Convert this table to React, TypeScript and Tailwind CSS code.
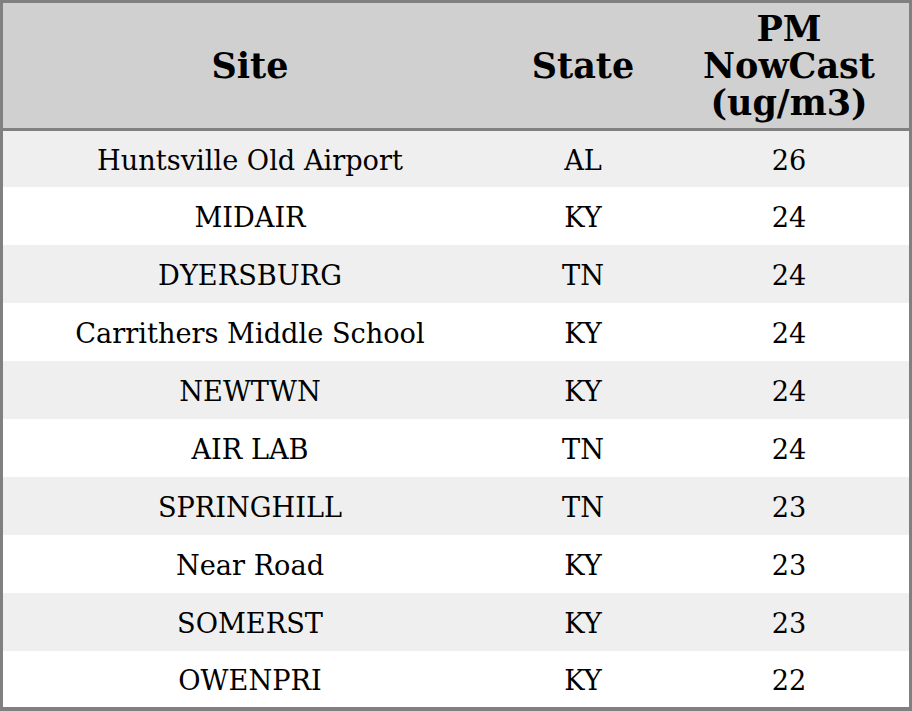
const rows: [string, string, string][] = [
  ["Huntsville Old Airport", "AL", "26"],
  ["MIDAIR", "KY", "24"],
  ["DYERSBURG", "TN", "24"],
  ["Carrithers Middle School", "KY", "24"],
  ["NEWTWN", "KY", "24"],
  ["AIR LAB", "TN", "24"],
  ["SPRINGHILL", "TN", "23"],
  ["Near Road", "KY", "23"],
  ["SOMERST", "KY", "23"],
  ["OWENPRI", "KY", "22"],
];

export default function App() {
  return (
    <div
      className="w-[912px] h-[711px] border-[3px] border-b-4 border-[#808080] bg-white text-black flex flex-col"
      style={{ fontFamily: '"DejaVu Serif", serif' }}
    >
      {/* header */}
      <div className="h-[128px] shrink-0 flex bg-[#d0d0d0] border-b-[3px] border-[#808080] text-[35px] font-bold leading-[37px]">
        <div className="w-[494px] flex items-center justify-center text-center">Site</div>
        <div className="w-[172px] flex items-center justify-center text-center">State</div>
        <div className="w-[240px] flex items-center justify-center text-center">
          PM
          <br />
          NowCast
          <br />
          (ug/m3)
        </div>
      </div>

      {rows.map((r, i) => (
        <div
          key={i}
          className={
            "flex shrink-0 pt-[3px] text-[27.2px] leading-none " +
            (i === 0 || i === rows.length - 1 ? "h-[56px] " : "h-[58px] ") +
            (i % 2 === 0 ? "bg-[#efefef]" : "bg-white")
          }
        >
          <div className="w-[494px] flex items-center justify-center">{r[0]}</div>
          <div className="w-[172px] flex items-center justify-center">{r[1]}</div>
          <div className="w-[240px] flex items-center justify-center">{r[2]}</div>
        </div>
      ))}
    </div>
  );
}
